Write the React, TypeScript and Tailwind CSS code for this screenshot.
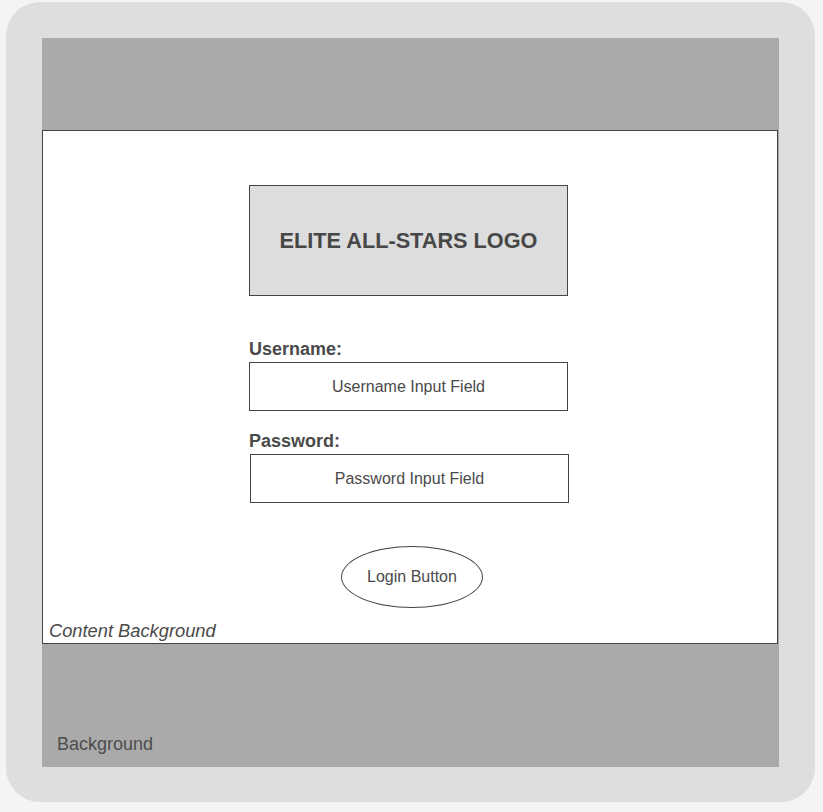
import React from 'react';

export default function App() {
  return (
    <div className="min-h-[812px] w-full bg-[#f4f4f4] pt-[2px] pl-[6px] font-['Liberation_Sans',Arial,sans-serif] text-[#4a4a4a]">
      {/* Outer frame */}
      <div className="flex h-[800px] w-[809px] rounded-[34px] bg-[#dedede] pt-[36px] pl-[36px]">
        {/* Background panel */}
        <div className="flex h-[729px] w-[737px] flex-col bg-[#aaaaaa]">
          <div className="h-[92px] shrink-0" />

          {/* Content background */}
          <div className="flex h-[514px] w-[736px] shrink-0 flex-col border border-[#444444] bg-white">
            <div className="ml-[206px] flex w-[319px] flex-col pt-[54px]">
              <div className="flex h-[111px] w-[319px] items-center justify-center border border-[#444444] bg-[#dddddd]">
                <span className="text-[21.7px] font-bold leading-[26px] text-[#474747]">ELITE ALL-STARS LOGO</span>
              </div>

              <label className="mt-[43px] text-[18px] font-bold leading-[20px]">Username:</label>
              <div className="mt-[3px] flex h-[49px] w-[319px] items-center justify-center border border-[#444444] text-[16px] leading-[20px]">
                Username Input Field
              </div>

              <label className="mt-[20px] text-[18px] font-bold leading-[20px]">Password:</label>
              <div className="ml-[1px] mt-[3px] flex h-[49px] w-[319px] items-center justify-center border border-[#444444] text-[16px] leading-[20px]">
                Password Input Field
              </div>

              <div className="ml-[92px] mt-[43px] flex h-[62px] w-[142px] items-center justify-center rounded-[50%] border border-[#444444] text-[16px] leading-[20px]">
                Login Button
              </div>
            </div>

            <div className="mt-auto pb-[2px] pl-[6px] text-[18.3px] italic leading-[20px]">Content Background</div>
          </div>

          <div className="flex flex-1 flex-col justify-end pb-[13px] pl-[15px]">
            <span className="text-[18px] leading-[20px] text-[#4d4d4d]">Background</span>
          </div>
        </div>
      </div>
    </div>
  );
}
